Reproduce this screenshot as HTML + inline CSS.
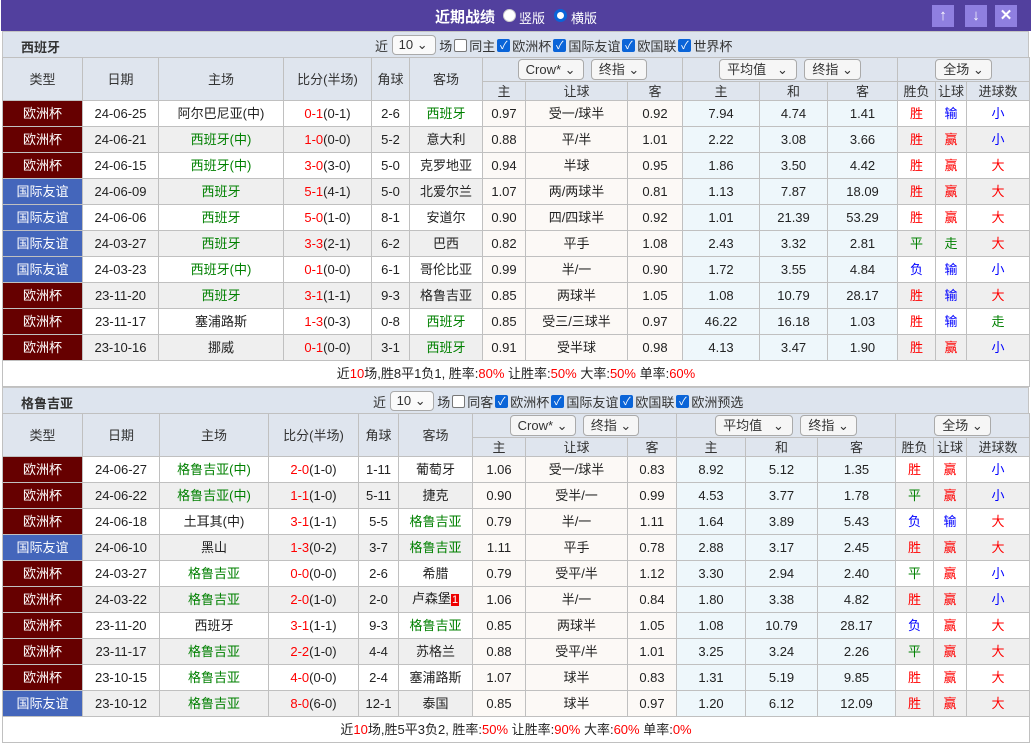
<!DOCTYPE html>
<html><head><meta charset="utf-8">
<style>
*{box-sizing:border-box}
body{margin:0;width:1032px;height:745px;background:#fff;font-family:"Liberation Sans","Noto Sans CJK SC",sans-serif;font-size:13px;color:#222;overflow:hidden;position:relative}
.title{position:absolute;left:1px;top:0;width:1030px;height:31px;background:#52409e;color:#fff}
.title .t{position:absolute;left:434px;top:6px;font-weight:bold;font-size:15px}
.rad{position:absolute;top:9px;width:13px;height:13px;border-radius:50%;background:#fff;border:1px solid #ccc}
.rad.on{border:3px solid #0a64d8;background:#fff}
.title .l{position:absolute;top:8px;font-size:13px}
.btn{position:absolute;top:5px;width:22px;height:22px;background:#8f7fe0;color:#fff;text-align:center;font-size:15px;line-height:22px;font-weight:bold}
.sec{position:absolute;left:2px;width:1027px;height:27px;background:#dde4ee;border:1px solid #c4c4c4;border-bottom:none}
.sec b{position:absolute;left:18px;top:5px;font-size:13px;color:#333}
.ctl{position:absolute;top:3px;font-size:13px;white-space:nowrap;color:#333}
.ctl span{display:inline-block;vertical-align:middle}
.sel{display:inline-block;border:1px solid #aaa;border-radius:4px;background:#fafafa;height:20px;line-height:18px;padding:0 6px;vertical-align:middle;font-size:13px}
.cb{width:13px;height:13px;border:1px solid #777;border-radius:2px;background:#fff;margin:0 2px}
.cb.on{background:#0a64d8;border-color:#0a64d8;color:#fff;font-size:11px;line-height:12px;text-align:center}
table{position:absolute;left:2px;width:1027px;border-collapse:collapse;table-layout:fixed}
td,th{border:1px solid #c0c0c0;text-align:center;padding:0;white-space:nowrap;overflow:hidden;font-weight:normal;line-height:15px}
th{background:#dfe5ee;color:#333}
tr.h1 th{height:24px}
tr.h2 th{height:19px}
tr.d td{height:26px}
tr.d td{background:#fff}
tr.d.g td{background:#efefef}
tr.d td.c{background:#fcf9f6}
tr.d td.a{background:#eef7fb}
td.eu{background:#660000 !important;color:#fff}
td.fr{background:#4466bb !important;color:#fff}
.gr{color:#008000}.r{color:#f00}.b{color:#00f}
.sm{background:#fff;height:26px}
.hs{display:inline-block;border:1px solid #aaa;border-radius:4px;background:#f6f6f6;height:21px;line-height:19px;padding:0 7px;font-size:13px}
.red1{background:#e00;color:#fff;font-size:11px;padding:0 1px}
</style></head><body>
<div class="title">
<div class="t">近期战绩</div>
<div class="rad" style="left:502px"></div><div class="l" style="left:518px">竖版</div>
<div class="rad on" style="left:553px"></div><div class="l" style="left:570px">横版</div>
<div class="btn" style="left:931px">↑</div><div class="btn" style="left:964px">↓</div><div class="btn" style="left:994px">✕</div>
</div>

<div class="sec" style="top:31px"><b>西班牙</b>
<div class="ctl" style="left:372px"><span>近</span> <span class="sel" style="width:44px">10 ⌄</span> <span>场</span><span class="cb"></span><span>同主</span><span class="cb on">✓</span><span>欧洲杯</span><span class="cb on">✓</span><span>国际友谊</span><span class="cb on">✓</span><span>欧国联</span><span class="cb on">✓</span><span>世界杯</span></div>
</div>
<table style="top:57px">
<colgroup><col style="width:80px"><col style="width:76px"><col style="width:125px"><col style="width:88px"><col style="width:38px"><col style="width:73px"><col style="width:43px"><col style="width:102px"><col style="width:55px"><col style="width:77px"><col style="width:68px"><col style="width:70px"><col style="width:38px"><col style="width:31px"><col style="width:63px"></colgroup>
<tr class="h1"><th rowspan="2">类型</th><th rowspan="2">日期</th><th rowspan="2">主场</th><th rowspan="2">比分(半场)</th><th rowspan="2">角球</th><th rowspan="2">客场</th><th colspan="3"><span class="hs">Crow* ⌄</span> &nbsp;<span class="hs">终指 ⌄</span></th><th colspan="3"><span class="hs" style="width:78px;text-align:left">平均值 &nbsp; ⌄</span> &nbsp;<span class="hs">终指 ⌄</span></th><th colspan="3"><span class="hs">全场 ⌄</span></th></tr>
<tr class="h2"><th>主</th><th>让球</th><th>客</th><th>主</th><th>和</th><th>客</th><th>胜负</th><th>让球</th><th>进球数</th></tr>
<tr class="d"><td class="eu">欧洲杯</td><td>24-06-25</td><td>阿尔巴尼亚(中)</td><td><span class="r">0-1</span>(0-1)</td><td>2-6</td><td class="gr">西班牙</td><td class="c">0.97</td><td class="c">受一/球半</td><td class="c">0.92</td><td class="a">7.94</td><td class="a">4.74</td><td class="a">1.41</td><td class="r">胜</td><td class="b">输</td><td class="b">小</td></tr>
<tr class="d g"><td class="eu">欧洲杯</td><td>24-06-21</td><td class="gr">西班牙(中)</td><td><span class="r">1-0</span>(0-0)</td><td>5-2</td><td>意大利</td><td class="c">0.88</td><td class="c">平/半</td><td class="c">1.01</td><td class="a">2.22</td><td class="a">3.08</td><td class="a">3.66</td><td class="r">胜</td><td class="r">赢</td><td class="b">小</td></tr>
<tr class="d"><td class="eu">欧洲杯</td><td>24-06-15</td><td class="gr">西班牙(中)</td><td><span class="r">3-0</span>(3-0)</td><td>5-0</td><td>克罗地亚</td><td class="c">0.94</td><td class="c">半球</td><td class="c">0.95</td><td class="a">1.86</td><td class="a">3.50</td><td class="a">4.42</td><td class="r">胜</td><td class="r">赢</td><td class="r">大</td></tr>
<tr class="d g"><td class="fr">国际友谊</td><td>24-06-09</td><td class="gr">西班牙</td><td><span class="r">5-1</span>(4-1)</td><td>5-0</td><td>北爱尔兰</td><td class="c">1.07</td><td class="c">两/两球半</td><td class="c">0.81</td><td class="a">1.13</td><td class="a">7.87</td><td class="a">18.09</td><td class="r">胜</td><td class="r">赢</td><td class="r">大</td></tr>
<tr class="d"><td class="fr">国际友谊</td><td>24-06-06</td><td class="gr">西班牙</td><td><span class="r">5-0</span>(1-0)</td><td>8-1</td><td>安道尔</td><td class="c">0.90</td><td class="c">四/四球半</td><td class="c">0.92</td><td class="a">1.01</td><td class="a">21.39</td><td class="a">53.29</td><td class="r">胜</td><td class="r">赢</td><td class="r">大</td></tr>
<tr class="d g"><td class="fr">国际友谊</td><td>24-03-27</td><td class="gr">西班牙</td><td><span class="r">3-3</span>(2-1)</td><td>6-2</td><td>巴西</td><td class="c">0.82</td><td class="c">平手</td><td class="c">1.08</td><td class="a">2.43</td><td class="a">3.32</td><td class="a">2.81</td><td class="gr">平</td><td class="gr">走</td><td class="r">大</td></tr>
<tr class="d"><td class="fr">国际友谊</td><td>24-03-23</td><td class="gr">西班牙(中)</td><td><span class="r">0-1</span>(0-0)</td><td>6-1</td><td>哥伦比亚</td><td class="c">0.99</td><td class="c">半/一</td><td class="c">0.90</td><td class="a">1.72</td><td class="a">3.55</td><td class="a">4.84</td><td class="b">负</td><td class="b">输</td><td class="b">小</td></tr>
<tr class="d g"><td class="eu">欧洲杯</td><td>23-11-20</td><td class="gr">西班牙</td><td><span class="r">3-1</span>(1-1)</td><td>9-3</td><td>格鲁吉亚</td><td class="c">0.85</td><td class="c">两球半</td><td class="c">1.05</td><td class="a">1.08</td><td class="a">10.79</td><td class="a">28.17</td><td class="r">胜</td><td class="b">输</td><td class="r">大</td></tr>
<tr class="d"><td class="eu">欧洲杯</td><td>23-11-17</td><td>塞浦路斯</td><td><span class="r">1-3</span>(0-3)</td><td>0-8</td><td class="gr">西班牙</td><td class="c">0.85</td><td class="c">受三/三球半</td><td class="c">0.97</td><td class="a">46.22</td><td class="a">16.18</td><td class="a">1.03</td><td class="r">胜</td><td class="b">输</td><td class="gr">走</td></tr>
<tr class="d g"><td class="eu">欧洲杯</td><td>23-10-16</td><td>挪威</td><td><span class="r">0-1</span>(0-0)</td><td>3-1</td><td class="gr">西班牙</td><td class="c">0.91</td><td class="c">受半球</td><td class="c">0.98</td><td class="a">4.13</td><td class="a">3.47</td><td class="a">1.90</td><td class="r">胜</td><td class="r">赢</td><td class="b">小</td></tr>
<tr><td colspan="15" class="sm">近<span class="r">10</span>场,胜8平1负1, 胜率:<span class="r">80%</span> 让胜率:<span class="r">50%</span> 大率:<span class="r">50%</span> 单率:<span class="r">60%</span></td></tr>
</table>

<div class="sec" style="top:387px"><b>格鲁吉亚</b>
<div class="ctl" style="left:370px"><span>近</span> <span class="sel" style="width:44px">10 ⌄</span> <span>场</span><span class="cb"></span><span>同客</span><span class="cb on">✓</span><span>欧洲杯</span><span class="cb on">✓</span><span>国际友谊</span><span class="cb on">✓</span><span>欧国联</span><span class="cb on">✓</span><span>欧洲预选</span></div>
</div>
<table style="top:413px">
<colgroup><col style="width:80px"><col style="width:77px"><col style="width:109px"><col style="width:90px"><col style="width:40px"><col style="width:74px"><col style="width:53px"><col style="width:102px"><col style="width:49px"><col style="width:69px"><col style="width:72px"><col style="width:78px"><col style="width:38px"><col style="width:33px"><col style="width:63px"></colgroup>
<tr class="h1"><th rowspan="2">类型</th><th rowspan="2">日期</th><th rowspan="2">主场</th><th rowspan="2">比分(半场)</th><th rowspan="2">角球</th><th rowspan="2">客场</th><th colspan="3"><span class="hs">Crow* ⌄</span> &nbsp;<span class="hs">终指 ⌄</span></th><th colspan="3"><span class="hs" style="width:78px;text-align:left">平均值 &nbsp; ⌄</span> &nbsp;<span class="hs">终指 ⌄</span></th><th colspan="3"><span class="hs">全场 ⌄</span></th></tr>
<tr class="h2"><th>主</th><th>让球</th><th>客</th><th>主</th><th>和</th><th>客</th><th>胜负</th><th>让球</th><th>进球数</th></tr>
<tr class="d"><td class="eu">欧洲杯</td><td>24-06-27</td><td class="gr">格鲁吉亚(中)</td><td><span class="r">2-0</span>(1-0)</td><td>1-11</td><td>葡萄牙</td><td class="c">1.06</td><td class="c">受一/球半</td><td class="c">0.83</td><td class="a">8.92</td><td class="a">5.12</td><td class="a">1.35</td><td class="r">胜</td><td class="r">赢</td><td class="b">小</td></tr>
<tr class="d g"><td class="eu">欧洲杯</td><td>24-06-22</td><td class="gr">格鲁吉亚(中)</td><td><span class="r">1-1</span>(1-0)</td><td>5-11</td><td>捷克</td><td class="c">0.90</td><td class="c">受半/一</td><td class="c">0.99</td><td class="a">4.53</td><td class="a">3.77</td><td class="a">1.78</td><td class="gr">平</td><td class="r">赢</td><td class="b">小</td></tr>
<tr class="d"><td class="eu">欧洲杯</td><td>24-06-18</td><td>土耳其(中)</td><td><span class="r">3-1</span>(1-1)</td><td>5-5</td><td class="gr">格鲁吉亚</td><td class="c">0.79</td><td class="c">半/一</td><td class="c">1.11</td><td class="a">1.64</td><td class="a">3.89</td><td class="a">5.43</td><td class="b">负</td><td class="b">输</td><td class="r">大</td></tr>
<tr class="d g"><td class="fr">国际友谊</td><td>24-06-10</td><td>黑山</td><td><span class="r">1-3</span>(0-2)</td><td>3-7</td><td class="gr">格鲁吉亚</td><td class="c">1.11</td><td class="c">平手</td><td class="c">0.78</td><td class="a">2.88</td><td class="a">3.17</td><td class="a">2.45</td><td class="r">胜</td><td class="r">赢</td><td class="r">大</td></tr>
<tr class="d"><td class="eu">欧洲杯</td><td>24-03-27</td><td class="gr">格鲁吉亚</td><td><span class="r">0-0</span>(0-0)</td><td>2-6</td><td>希腊</td><td class="c">0.79</td><td class="c">受平/半</td><td class="c">1.12</td><td class="a">3.30</td><td class="a">2.94</td><td class="a">2.40</td><td class="gr">平</td><td class="r">赢</td><td class="b">小</td></tr>
<tr class="d g"><td class="eu">欧洲杯</td><td>24-03-22</td><td class="gr">格鲁吉亚</td><td><span class="r">2-0</span>(1-0)</td><td>2-0</td><td>卢森堡<span class="red1">1</span></td><td class="c">1.06</td><td class="c">半/一</td><td class="c">0.84</td><td class="a">1.80</td><td class="a">3.38</td><td class="a">4.82</td><td class="r">胜</td><td class="r">赢</td><td class="b">小</td></tr>
<tr class="d"><td class="eu">欧洲杯</td><td>23-11-20</td><td>西班牙</td><td><span class="r">3-1</span>(1-1)</td><td>9-3</td><td class="gr">格鲁吉亚</td><td class="c">0.85</td><td class="c">两球半</td><td class="c">1.05</td><td class="a">1.08</td><td class="a">10.79</td><td class="a">28.17</td><td class="b">负</td><td class="r">赢</td><td class="r">大</td></tr>
<tr class="d g"><td class="eu">欧洲杯</td><td>23-11-17</td><td class="gr">格鲁吉亚</td><td><span class="r">2-2</span>(1-0)</td><td>4-4</td><td>苏格兰</td><td class="c">0.88</td><td class="c">受平/半</td><td class="c">1.01</td><td class="a">3.25</td><td class="a">3.24</td><td class="a">2.26</td><td class="gr">平</td><td class="r">赢</td><td class="r">大</td></tr>
<tr class="d"><td class="eu">欧洲杯</td><td>23-10-15</td><td class="gr">格鲁吉亚</td><td><span class="r">4-0</span>(0-0)</td><td>2-4</td><td>塞浦路斯</td><td class="c">1.07</td><td class="c">球半</td><td class="c">0.83</td><td class="a">1.31</td><td class="a">5.19</td><td class="a">9.85</td><td class="r">胜</td><td class="r">赢</td><td class="r">大</td></tr>
<tr class="d g"><td class="fr">国际友谊</td><td>23-10-12</td><td class="gr">格鲁吉亚</td><td><span class="r">8-0</span>(6-0)</td><td>12-1</td><td>泰国</td><td class="c">0.85</td><td class="c">球半</td><td class="c">0.97</td><td class="a">1.20</td><td class="a">6.12</td><td class="a">12.09</td><td class="r">胜</td><td class="r">赢</td><td class="r">大</td></tr>
<tr><td colspan="15" class="sm">近<span class="r">10</span>场,胜5平3负2, 胜率:<span class="r">50%</span> 让胜率:<span class="r">90%</span> 大率:<span class="r">60%</span> 单率:<span class="r">0%</span></td></tr>
</table>
</body></html>
